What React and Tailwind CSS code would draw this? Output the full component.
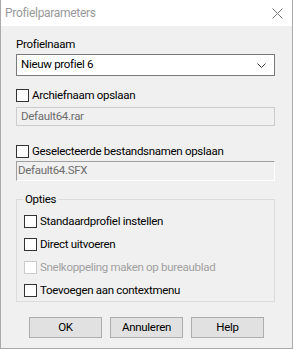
import React from 'react';

const Check = ({ label, disabled }) => (
  <div className="flex items-center h-[13px]">
    <div
      className={`w-[13px] h-[13px] border bg-white shrink-0 ${disabled ? 'border-[#cccccc]' : 'border-[#333333]'}`}
    />
    <span className={`ml-[3px] leading-[13px] ${disabled ? 'text-[#a0a0a0]' : 'text-black'}`}>{label}</span>
  </div>
);

const Button = ({ children }) => (
  <button className="w-[73px] h-[21px] bg-[#e1e1e1] border border-[#adadad] text-black leading-none">
    {children}
  </button>
);

export default function App() {
  return (
    <div
      className="w-[293px] h-[349px] bg-[#f0f0f0] border border-t-0 border-[#aaaaaa] text-[11.5px] tracking-[-0.3px] flex flex-col"
      style={{ fontFamily: '"Segoe UI", Roboto, sans-serif' }}
    >
      {/* Title bar */}
      <div className="h-[26px] bg-white flex items-center justify-between pl-[4px] pr-[9px] shrink-0">
        <span className="text-[#999999] text-[12px]">Profielparameters</span>
        <svg width="11" height="11" viewBox="0 0 11 11">
          <path d="M0.5 0.5 L10.5 10.5 M10.5 0.5 L0.5 10.5" stroke="#777777" strokeWidth="1" fill="none" />
        </svg>
      </div>

      {/* Body */}
      <div className="pl-[15px] pr-[17px] flex flex-col">
        <div className="mt-[11px] leading-[15px]">Profielnaam</div>
        <div className="mt-[2px] h-[22px] bg-white border border-[#7a7a7a] flex items-center justify-between pl-[4px] pr-[8px]">
          <span>Nieuw profiel 6</span>
          <svg width="9" height="5" viewBox="0 0 9 5">
            <path d="M0.5 0.5 L4.5 4.5 L8.5 0.5" stroke="#333333" strokeWidth="1" fill="none" />
          </svg>
        </div>

        <div className="mt-[13px]">
          <Check label="Archiefnaam opslaan" />
        </div>
        <div className="mt-[5px] h-[19px] border border-[#cccccc] bg-[#f0f0f0] flex items-center pl-[4px] text-[#6d6d6d]">
          Default64.rar
        </div>

        <div className="mt-[19px]">
          <Check label="Geselecteerde bestandsnamen opslaan" />
        </div>
        <div className="mt-[3px] h-[20px] border border-t-[#a0a0a0] border-l-[#a0a0a0] border-r-white border-b-white bg-[#f0f0f0] flex items-center pl-[1px] text-[#6d6d6d]">
          Default64.SFX
        </div>

        {/* Options group */}
        <div className="relative mt-[18px] h-[103px] border border-[#dcdcdc] pl-[7px] pt-[15px] flex flex-col gap-[10px]">
          <span className="absolute -top-[8px] left-[6px] bg-[#f0f0f0] px-[2px] leading-[15px]">Opties</span>
          <Check label="Standaardprofiel instellen" />
          <Check label="Direct uitvoeren" />
          <Check label="Snelkoppeling maken op bureaublad" disabled />
          <Check label="Toevoegen aan contextmenu" />
        </div>

        <div className="mt-[15px] flex gap-[8px] pl-[13px]">
          <Button>OK</Button>
          <Button>Annuleren</Button>
          <Button>Help</Button>
        </div>
      </div>
    </div>
  );
}
